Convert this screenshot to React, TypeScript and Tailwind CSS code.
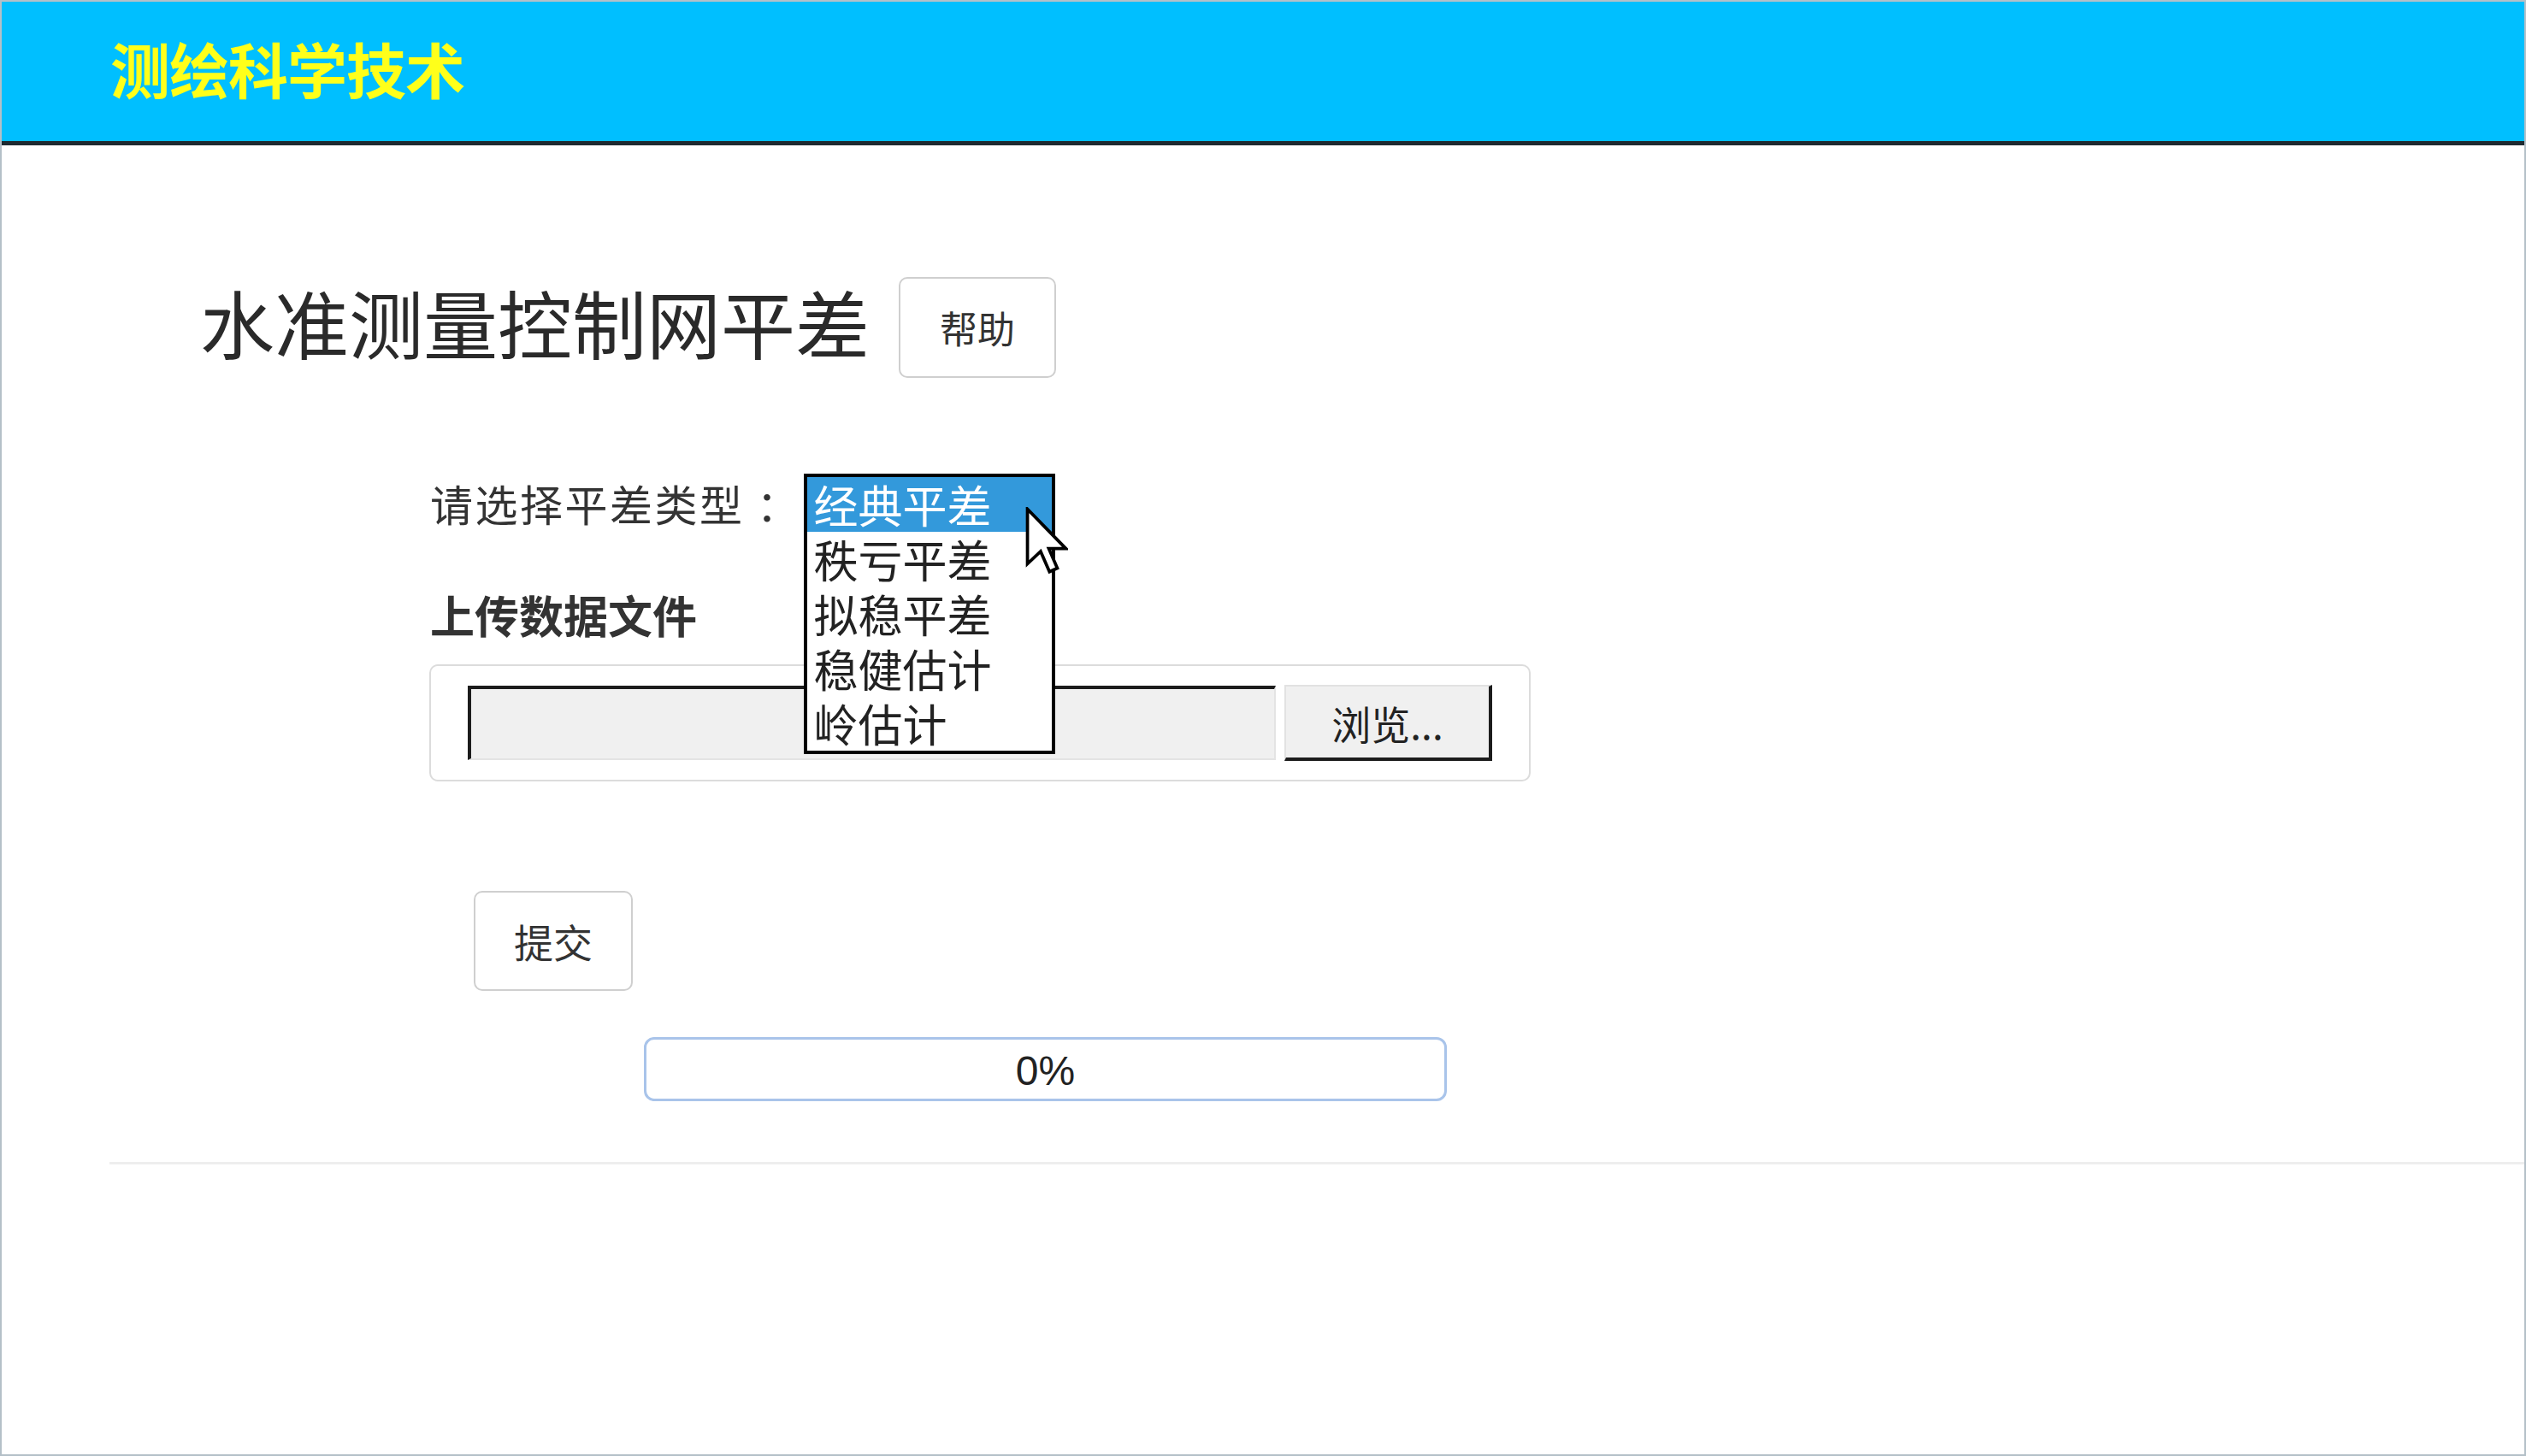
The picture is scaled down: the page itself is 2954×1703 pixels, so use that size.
import React from "react";

const cjk = "font-['Noto_Sans_CJK_SC','Noto_Sans',sans-serif]";

function Cursor() {
  return (
    <svg
      className="absolute left-[259px] top-[39px]"
      width="50"
      height="79"
      viewBox="0 0 12 19"
    >
      <path
        d="M0.6,0.6 L0.6,16 L4.3,12.5 L6.8,18.2 L9,17.2 L6.6,11.7 L11.4,11.7 Z"
        fill="#ffffff"
        stroke="#000000"
        strokeWidth="0.9"
        strokeLinejoin="miter"
      />
    </svg>
  );
}

export default function App() {
  const options = ["经典平差", "秩亏平差", "拟稳平差", "稳健估计", "岭估计"];
  return (
    <div className={`w-[2954px] h-[1703px] border-2 border-[#b4c0c8] bg-white overflow-hidden ${cjk}`}>
      {/* header */}
      <div className="h-[168px] bg-[#00bfff] border-b-[5px] border-[#1e2a30] flex items-center pl-[127px] pb-[8px]">
        <span className="text-[70px] font-bold leading-none text-[#ffff1a] tracking-[-1px]">
          测绘科学技术
        </span>
      </div>

      {/* title row */}
      <div className="mt-[154px] pl-[232px] flex items-center">
        <h1 className="text-[87px] leading-none font-normal text-[#2a2a2a] mb-[14px]">水准测量控制网平差</h1>
        <button className="ml-[34px] w-[184px] h-[118px] border-2 border-[#cfcfcf] rounded-[10px] bg-white text-[44px] text-[#333]">
          帮助
        </button>
      </div>

      {/* select row */}
      <div className="mt-[112px] pl-[501px] flex items-start">
        <span className="text-[50px] leading-[68px] text-[#333] tracking-[2.5px]">
          请选择平差类型<span className="inline-block pl-[14px] w-[50px] tracking-normal">：</span>
        </span>
        <div className="relative ml-[19px] w-[294px] h-[68px]">
          <div className="absolute left-0 top-0 w-[294px] border-4 border-black bg-white z-10">
            {options.map((o, i) => (
              <div
                key={o}
                className={
                  i === 0
                    ? "h-[64px] pl-[8px] text-[52px] leading-[64px] bg-[#3399db] text-white"
                    : "h-[64px] pl-[8px] text-[52px] leading-[64px] text-[#222]"
                }
              >
                {o}
              </div>
            ))}
          </div>
          <div className="absolute left-0 top-0 z-20">
            <Cursor />
          </div>
        </div>
      </div>

      {/* upload label */}
      <div className="mt-[67px] pl-[501px]">
        <span className="text-[52px] leading-[60px] font-bold text-[#333]">上传数据文件</span>
      </div>

      {/* upload panel */}
      <div className="mt-[28px] ml-[500px] w-[1288px] h-[137px] border-2 border-[#dcdcdc] rounded-[10px] bg-white flex items-center pl-[43px]">
        <div className="w-[945px] h-[87px] bg-[#f0f0f0] border-t-4 border-l-4 border-t-[#1c1c1c] border-l-[#1c1c1c] border-b-2 border-r-2 border-b-[#e4e4e4] border-r-[#e4e4e4]"></div>
        <button className="ml-[10px] w-[243px] h-[89px] bg-[#f0f0f0] border-t-2 border-l-2 border-t-[#e2e2e2] border-l-[#e2e2e2] border-b-4 border-r-4 border-b-[#1c1c1c] border-r-[#1c1c1c] text-[46px] text-[#222] leading-none">
          浏览...
        </button>
      </div>

      {/* submit */}
      <div className="mt-[128px] ml-[552px]">
        <button className="w-[186px] h-[117px] border-2 border-[#cfcfcf] rounded-[10px] bg-white text-[46px] text-[#333]">
          提交
        </button>
      </div>

      {/* progress */}
      <div className="mt-[54px] ml-[751px] w-[939px] h-[75px] border-[3px] border-[#a9c4ea] rounded-[12px] flex items-center justify-center">
        <span className="font-['Liberation_Sans',sans-serif] text-[48px] leading-none text-[#222] mt-[4px]">0%</span>
      </div>

      {/* hr */}
      <div className="mt-[71px] ml-[126px] h-[3px] bg-[#eeeeee]"></div>
    </div>
  );
}
